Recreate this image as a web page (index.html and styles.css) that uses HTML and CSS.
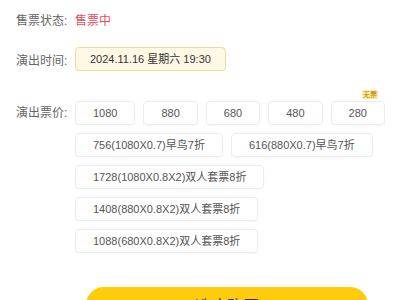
FILE: index.html
```html
<!DOCTYPE html>
<html lang="zh-CN">
<head>
  <meta charset="UTF-8" />
  <meta name="viewport" content="width=device-width, initial-scale=1.0"/>
  <title>购票</title>
  <link rel="stylesheet" href="styles.css">
</head>
<body>

  <div class="row">
    <span class="label">售票状态:</span>
    <span class="status">售票中</span>
  </div>

  <div class="row">
    <span class="label">演出时间:</span>
    <span class="date">2024.11.16 星期六 19:30</span>
  </div>

  <div class="row prices-row">
    <span class="label">演出票价:</span>
    <div class="prices">
      <span class="price">1080</span>
      <span class="price">880</span>
      <span class="price">680</span>
      <span class="price">480</span>
      <span class="price sold">280<em class="tag">无票</em></span>
      <span class="price">756(1080X0.7)早鸟7折</span>
      <span class="price">616(880X0.7)早鸟7折</span>
      <span class="price">1728(1080X0.8X2)双人套票8折</span>
      <span class="price">1408(880X0.8X2)双人套票8折</span>
      <span class="price">1088(680X0.8X2)双人套票8折</span>
    </div>
  </div>

  <button class="buy">选座购买</button>

</body>
</html>
```

FILE: styles.css
```css
body {
  margin: 0;
  padding: 7px 0 0 16px;
  font-family: "Liberation Sans", "Noto Sans CJK SC", sans-serif;
  background: #fff;
  color: #333;
  overflow: hidden;
}
.row {
  display: flex;
  align-items: center;
  height: 24px;
  margin-bottom: 16px;
}
.label {
  width: 59px;
  flex-shrink: 0;
  font-size: 12px;
  color: #666;
}
.status {
  font-size: 12px;
  color: #e2505b;
}
.date {
  height: 22px;
  line-height: 22px;
  padding: 0 14px;
  font-size: 11px;
  color: #333;
  background: #fff8e4;
  border: 1px solid #f3dc91;
  border-radius: 4px;
}
.prices-row {
  align-items: flex-start;
  height: auto;
  margin-top: 30px;
}
.prices-row .label {
  line-height: 24px;
}
.prices {
  display: flex;
  flex-wrap: wrap;
  gap: 8px 8px;
  width: 315px;
}
.price {
  position: relative;
  height: 22px;
  line-height: 22px;
  padding: 0 17px;
  font-size: 11px;
  color: #555;
  border: 1px solid #ececec;
  border-radius: 4px;
  box-shadow: 0 1px 2px rgba(0, 0, 0, 0.04);
}
.tag {
  position: absolute;
  top: -12px;
  right: 6px;
  padding: 0 1px;
  font-style: normal;
  font-size: 7px;
  line-height: 9px;
  color: #b98300;
  background: #fbeaa2;
  border-radius: 2px;
}
.buy {
  display: block;
  width: 282px;
  height: 36px;
  margin: 34px 0 0 70px;
  padding: 0;
  border: none;
  border-radius: 18px;
  background: #ffcc0d;
  font-family: "Liberation Sans", "Noto Sans CJK SC", sans-serif;
  font-size: 16px;
  color: #333;
}
```
